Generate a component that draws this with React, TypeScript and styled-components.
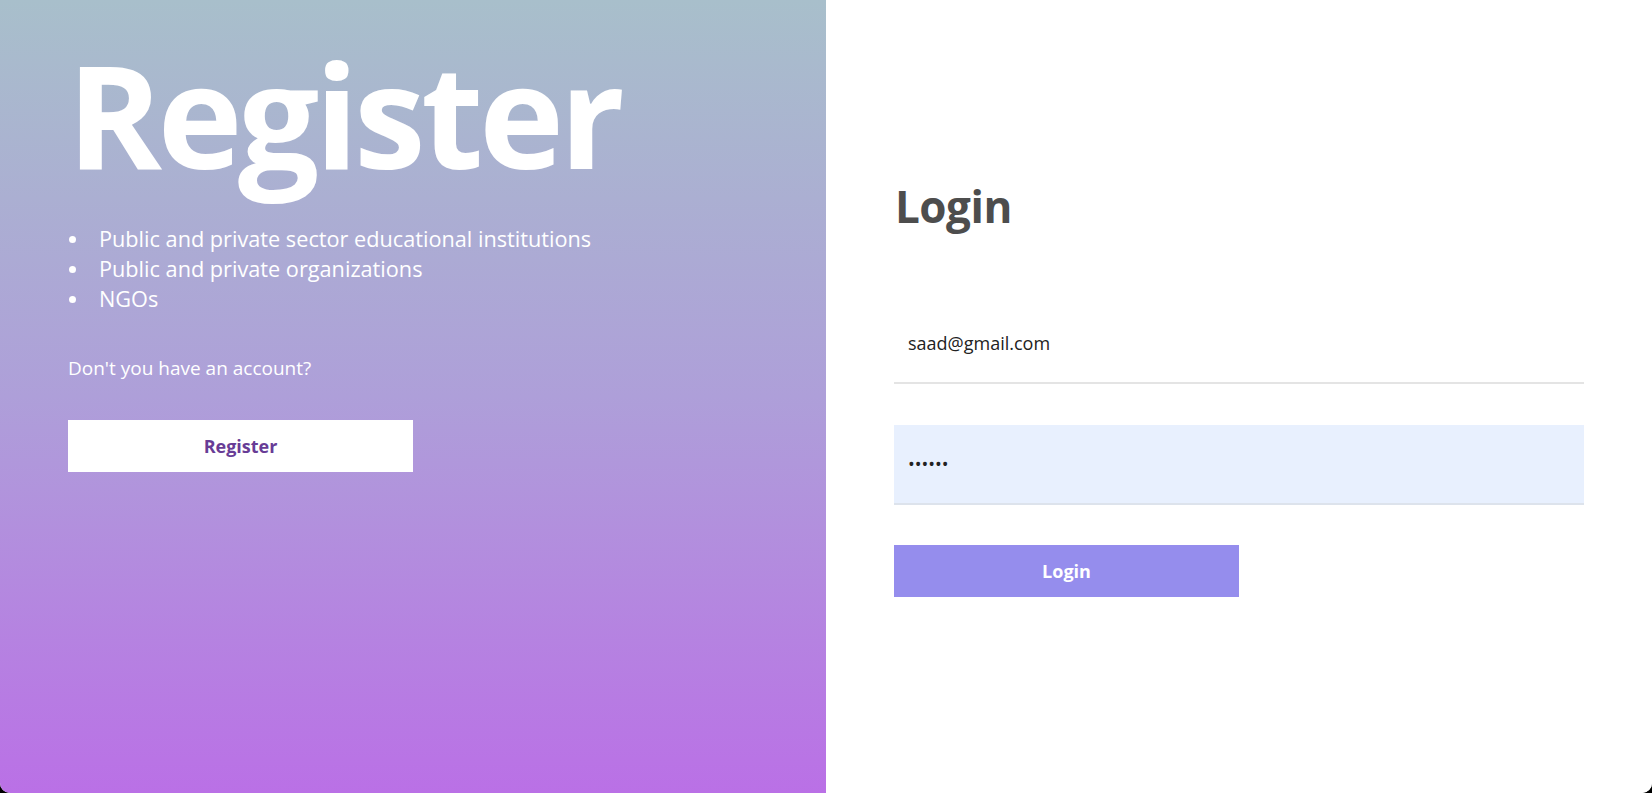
import React from "react";
import styled, { createGlobalStyle } from "styled-components";

const Global = createGlobalStyle`
  html, body {
    margin: 0;
    padding: 0;
    background: #000;
  }
  body {
    font-family: "Open Sans", "Noto Sans", sans-serif;
  }
  * { box-sizing: border-box; }
`;

const Page = styled.div`
  display: grid;
  grid-template-columns: 1fr 1fr;
  height: 793px;
  border-radius: 0 0 10px 10px;
  overflow: hidden;
  background: #fff;
`;

const LeftPanel = styled.section`
  background: linear-gradient(to bottom, #a8bfcb 0%, #ae9fd9 50%, #ba70e6 100%);
  padding: 41px 68px 0;
  display: flex;
  flex-direction: column;
  align-items: flex-start;
  color: #fff;
`;

const BigTitle = styled.h1`
  margin: 0 0 0 -1px;
  font-size: 144px;
  line-height: 144px;
  font-weight: 700;
  letter-spacing: -4.6px;
  color: #fff;
`;

const List = styled.ul`
  list-style: none;
  margin: 39px 0 0;
  padding: 0;
`;

const Item = styled.li`
  display: flex;
  align-items: center;
  gap: 23px;
  font-size: 21.7px;
  line-height: 30px;
  color: #fff;
  &::before {
    content: "";
    flex: none;
    width: 7px;
    height: 7px;
    border-radius: 50%;
    background: #fff;
    margin-left: 1px;
  }
`;

const Question = styled.p`
  margin: 40px 0 0;
  font-size: 19px;
  line-height: 28px;
  color: #fff;
`;

const Button = styled.button<{ $variant: "light" | "primary" }>`
  width: 50%;
  height: 52px;
  border: none;
  border-radius: 0;
  font-family: "Open Sans", sans-serif;
  font-size: 18px;
  font-weight: 700;
  cursor: pointer;
  background: ${(p) => (p.$variant === "light" ? "#ffffff" : "#958ded")};
  color: ${(p) => (p.$variant === "light" ? "#683c96" : "#ffffff")};
`;

const RegisterButton = styled(Button)`
  margin-top: 38px;
`;

const RightPanel = styled.section`
  background: #fff;
  padding: 180px 68px 0;
  display: flex;
  flex-direction: column;
`;

const Title = styled.h2`
  margin: 0 0 0 1px;
  font-size: 44px;
  line-height: 52px;
  font-weight: 700;
  letter-spacing: -0.5px;
  color: #4d4d4d;
`;

const Form = styled.form`
  display: flex;
  flex-direction: column;
  align-items: flex-start;
  margin-top: 72px;
`;

const Input = styled.input<{ $filled?: boolean }>`
  width: 100%;
  height: 80px;
  border: none;
  border-bottom: 2px solid ${(p) => (p.$filled ? "#dde3ec" : "#e4e4e4")};
  background: ${(p) => (p.$filled ? "#e8f0fe" : "transparent")};
  padding: 0 14px;
  font-family: "Open Sans", sans-serif;
  font-size: 18px;
  color: #222;
  outline: none;
  & + & {
    margin-top: 41px;
  }
`;

const LoginButton = styled(Button)`
  margin-top: 40px;
`;

export default function App() {
  return (
    <>
      <Global />
      <Page>
        <LeftPanel>
          <BigTitle>Register</BigTitle>
          <List>
            <Item>Public and private sector educational institutions</Item>
            <Item>Public and private organizations</Item>
            <Item>NGOs</Item>
          </List>
          <Question>Don't you have an account?</Question>
          <RegisterButton $variant="light" type="button">
            Register
          </RegisterButton>
        </LeftPanel>
        <RightPanel>
          <Title>Login</Title>
          <Form onSubmit={(e) => e.preventDefault()}>
            <Input type="email" defaultValue="saad@gmail.com" />
            <Input type="password" defaultValue="123456" $filled />
            <LoginButton $variant="primary" type="submit">
              Login
            </LoginButton>
          </Form>
        </RightPanel>
      </Page>
    </>
  );
}
